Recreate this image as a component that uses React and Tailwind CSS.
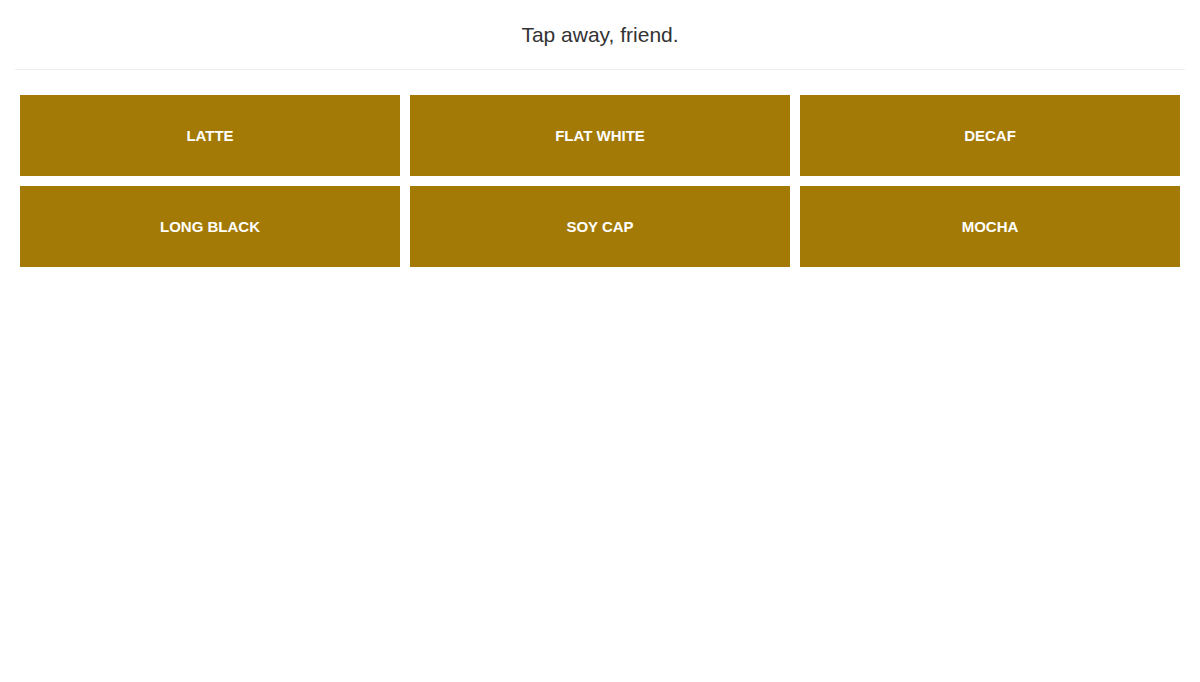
import React from 'react';

const drinks = ['LATTE', 'FLAT WHITE', 'DECAF', 'LONG BLACK', 'SOY CAP', 'MOCHA'];

const DrinkButton = ({ name, onTap }) => (
  <button
    onClick={() => onTap(name)}
    className="h-[81px] pt-[2px] bg-[#a37a06] text-white text-[15px] font-bold flex items-center justify-center hover:bg-[#8f6a05] transition"
  >
    {name}
  </button>
);

const App = () => {
  const handleTap = (name) => {
    console.log('tapped', name);
  };

  return (
    <div className="min-h-screen bg-white px-[15px] font-['Liberation_Sans',Arial,sans-serif]">
      <header className="h-[70px] border-b border-[#eeeeee] flex items-center justify-center">
        <h1 className="text-[21px] text-[#333333] leading-none">Tap away, friend.</h1>
      </header>

      <div className="grid grid-cols-3 gap-[10px] px-[5px] pt-[25px]">
        {drinks.map((d) => (
          <DrinkButton key={d} name={d} onTap={handleTap} />
        ))}
      </div>
    </div>
  );
};

export default App;
